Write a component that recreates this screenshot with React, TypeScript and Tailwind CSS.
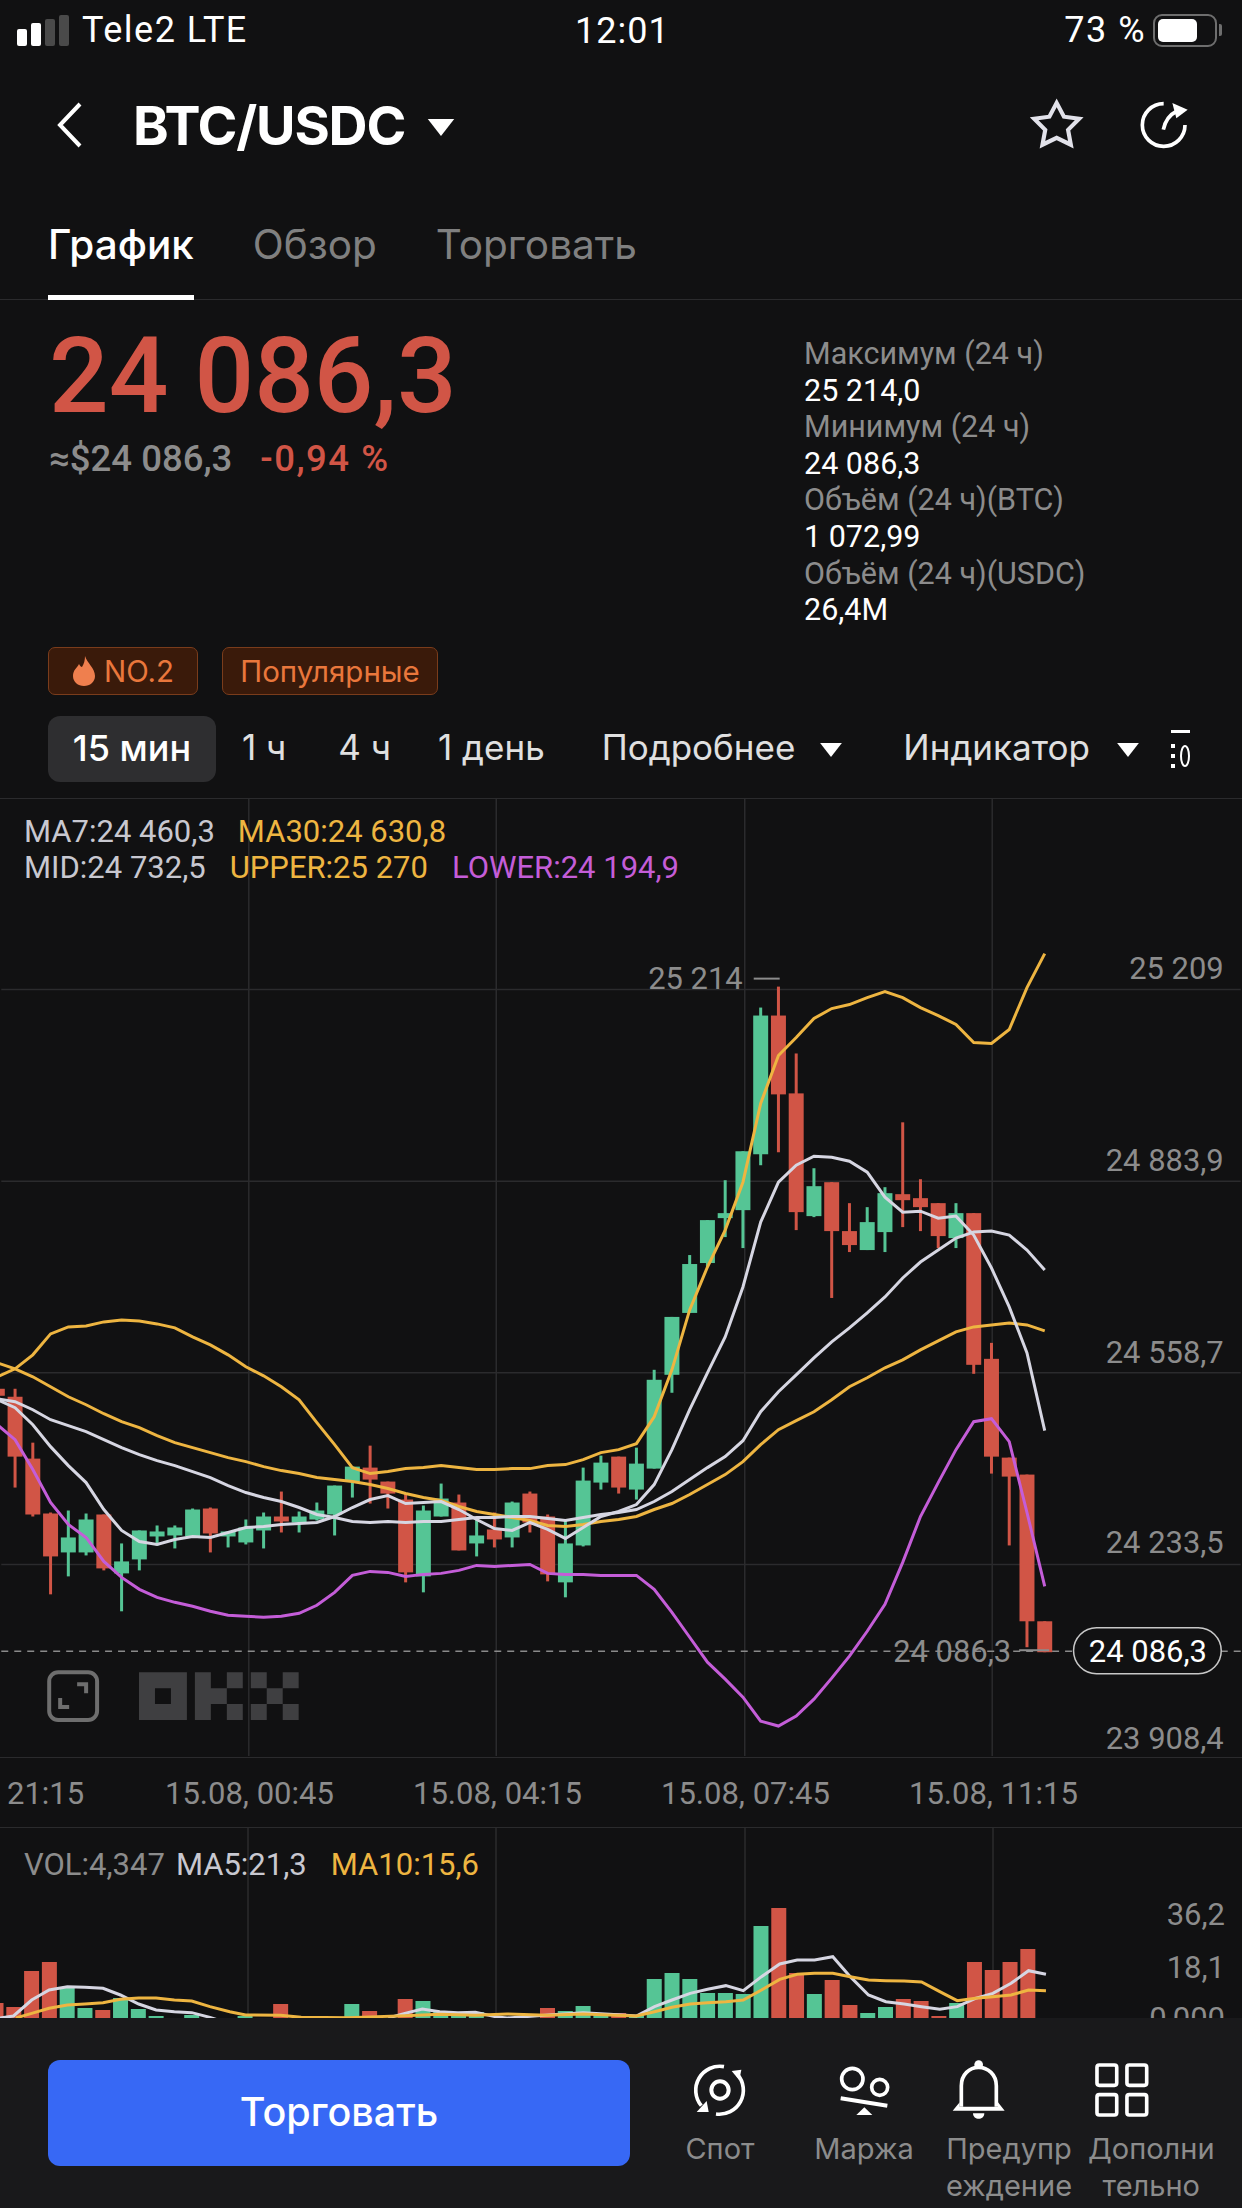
const GREEN = "#55c595";
const RED = "#d15546";
const GRID = "#2b2b2d";

const cx = (i: number) => 13.8 + 17.79 * i;

// i, wick top, wick bottom, body top, body bottom, up
type Candle = [number, number, number, number, number, boolean];
const candles: Candle[] = [
  [-1, 1389, 1400, 1389, 1396, false],
  [0, 1389, 1488, 1397, 1457, false],
  [1, 1443, 1517, 1459, 1515, false],
  [2, 1513, 1595, 1514, 1557, false],
  [3, 1511, 1577, 1538, 1553, true],
  [4, 1514, 1556, 1520, 1553, true],
  [5, 1515, 1571, 1515, 1569, false],
  [6, 1544, 1612, 1562, 1574, true],
  [7, 1531, 1571, 1531, 1560, true],
  [8, 1526, 1546, 1532, 1537, true],
  [9, 1526, 1549, 1528, 1536, true],
  [10, 1509, 1537, 1510, 1537, true],
  [11, 1508, 1553, 1509, 1534, false],
  [12, 1532, 1548, 1532, 1537, true],
  [13, 1520, 1545, 1528, 1543, true],
  [14, 1513, 1549, 1517, 1531, true],
  [15, 1492, 1533, 1517, 1522, false],
  [16, 1512, 1533, 1517, 1523, true],
  [17, 1503, 1521, 1511, 1520, true],
  [18, 1486, 1536, 1486, 1515, true],
  [19, 1467, 1498, 1467, 1482, true],
  [20, 1446, 1504, 1468, 1480, false],
  [21, 1482, 1509, 1482, 1494, false],
  [22, 1494, 1583, 1500, 1573, false],
  [23, 1506, 1593, 1511, 1577, true],
  [24, 1484, 1517, 1499, 1517, true],
  [25, 1495, 1551, 1503, 1551, false],
  [26, 1520, 1557, 1536, 1544, true],
  [27, 1513, 1548, 1530, 1540, false],
  [28, 1502, 1548, 1503, 1538, true],
  [29, 1492, 1533, 1494, 1523, false],
  [30, 1515, 1582, 1517, 1575, false],
  [31, 1520, 1598, 1544, 1583, true],
  [32, 1468, 1547, 1481, 1546, true],
  [33, 1456, 1490, 1463, 1483, true],
  [34, 1457, 1494, 1457, 1488, false],
  [35, 1448, 1500, 1464, 1490, true],
  [36, 1370, 1469, 1380, 1469, true],
  [37, 1317, 1393, 1317, 1375, true],
  [38, 1255, 1313, 1264, 1313, true],
  [39, 1220, 1267, 1220, 1263, true],
  [40, 1180, 1237, 1213, 1218, true],
  [41, 1151, 1248, 1151, 1210, true],
  [42, 1007, 1165, 1015, 1154, true],
  [43, 986, 1152, 1015, 1094, false],
  [44, 1053, 1230, 1093, 1212, false],
  [45, 1168, 1217, 1186, 1216, true],
  [46, 1182, 1298, 1182, 1231, false],
  [47, 1203, 1252, 1231, 1245, false],
  [48, 1207, 1250, 1222, 1250, true],
  [49, 1187, 1252, 1193, 1232, true],
  [50, 1122, 1227, 1194, 1200, false],
  [51, 1179, 1231, 1198, 1207, false],
  [52, 1203, 1248, 1203, 1236, false],
  [53, 1203, 1248, 1213, 1238, true],
  [54, 1213, 1374, 1213, 1365, false],
  [55, 1343, 1474, 1359, 1457, false],
  [56, 1458, 1546, 1458, 1477, false],
  [57, 1475, 1648, 1475, 1622, false],
  [58, 1622, 1653, 1622, 1653, false],
];

// line values per candle, starting at candle -1
const upper = [1377, 1369, 1355, 1334, 1327, 1326, 1322, 1320, 1321, 1324, 1328, 1337, 1345, 1355, 1367, 1376, 1387, 1400, 1423, 1445, 1468, 1474, 1472, 1469, 1468, 1466, 1468, 1470, 1470, 1469, 1469, 1466, 1465, 1460, 1453, 1450, 1444, 1417, 1370, 1310, 1267, 1230, 1182, 1103, 1055, 1037, 1018, 1008, 1004, 997, 991, 997, 1007, 1015, 1024, 1042, 1043, 1029, 987, 953];
const ma30 = [1363, 1369, 1377, 1387, 1397, 1405, 1414, 1422, 1428, 1436, 1443, 1448, 1453, 1458, 1462, 1467, 1471, 1474, 1478, 1480, 1482, 1485, 1489, 1494, 1498, 1501, 1507, 1512, 1515, 1518, 1521, 1526, 1527, 1525, 1522, 1520, 1517, 1510, 1504, 1495, 1485, 1475, 1462, 1445, 1430, 1421, 1412, 1400, 1387, 1378, 1368, 1360, 1350, 1341, 1332, 1327, 1325, 1323, 1325, 1331];
const ma7 = [1400, 1408, 1425, 1447, 1466, 1483, 1510, 1531, 1542, 1545, 1540, 1537, 1538, 1533, 1528, 1527, 1525, 1524, 1523, 1517, 1508, 1500, 1496, 1504, 1503, 1502, 1510, 1520, 1529, 1531, 1523, 1530, 1539, 1528, 1517, 1512, 1505, 1485, 1450, 1410, 1373, 1337, 1287, 1222, 1182, 1165, 1156, 1157, 1161, 1172, 1197, 1212, 1211, 1218, 1216, 1235, 1268, 1307, 1353, 1431];
const mid = [1399, 1402, 1410, 1420, 1426, 1432, 1440, 1448, 1455, 1461, 1466, 1472, 1478, 1486, 1493, 1498, 1502, 1508, 1515, 1518, 1522, 1523, 1522, 1523, 1522, 1522, 1520, 1518, 1518, 1517, 1517, 1519, 1521, 1518, 1515, 1513, 1510, 1502, 1492, 1480, 1468, 1457, 1441, 1412, 1392, 1375, 1358, 1342, 1328, 1313, 1297, 1278, 1262, 1250, 1238, 1232, 1231, 1235, 1250, 1270];
const lower = [1425, 1440, 1470, 1503, 1525, 1538, 1562, 1578, 1590, 1598, 1603, 1607, 1612, 1616, 1617, 1618, 1617, 1614, 1606, 1593, 1576, 1572, 1573, 1577, 1575, 1574, 1571, 1566, 1567, 1566, 1565, 1574, 1575, 1575, 1576, 1576, 1576, 1590, 1613, 1638, 1663, 1680, 1698, 1722, 1727, 1717, 1700, 1679, 1657, 1632, 1605, 1563, 1517, 1483, 1450, 1422, 1419, 1442, 1513, 1587];

const toPoints = (ys: number[]) => ys.map((y, k) => `${cx(k - 1)},${y}`).join(" ");

// candle index, height, up
const volumes: [number, number, boolean][] = [
  [-1, 15, false], [0, 11, false], [1, 47, false], [2, 56, false], [3, 30, true], [4, 10, true], [5, 8, false], [6, 20, true], [7, 9, true], [8, 2, true], [10, 3, true],
  [13, 2, true], [15, 14, false], [19, 14, true], [20, 7, false], [22, 19, false], [23, 17, true], [24, 6, true], [25, 2, true], [26, 6, true],
  [30, 10, false], [31, 7, true], [32, 12, true], [33, 5, true], [34, 5, false], [35, 3, true],
  [36, 39, true], [37, 45, true], [38, 39, true], [39, 25, true], [40, 25, true], [41, 24, true], [42, 92, true], [43, 110, false], [44, 45, false], [45, 24, true], [46, 38, false], [47, 13, false], [48, 5, true], [49, 11, true], [50, 19, false], [51, 17, false], [52, 2, false], [53, 15, true], [54, 56, false], [55, 48, false], [56, 56, false], [57, 69, false],
];

const volMa5: [number, number][] = [[0, 714], [17, 708], [40, 660], [62, 630], [85, 620], [107, 622], [130, 625], [152, 645], [175, 672], [197, 690], [220, 695], [242, 698], [265, 712], [275, 720]];
const volMa5b: [number, number][] = [[490, 714], [511, 700], [533, 687], [555, 695], [578, 698], [600, 697], [625, 710], [640, 714], [692, 705], [736, 698], [780, 704], [803, 708], [826, 680], [848, 660], [871, 640], [893, 628], [916, 617], [938, 632], [961, 590], [984, 552], [1006, 540], [1028, 540], [1051, 530], [1073, 590], [1096, 645], [1118, 665], [1141, 672], [1163, 680], [1186, 688], [1208, 680], [1231, 655], [1253, 640], [1276, 610], [1298, 572], [1320, 583]];
const volMa10: [number, number][] = [[20, 714], [40, 700], [62, 685], [85, 675], [107, 672], [130, 668], [152, 658], [175, 654], [197, 654], [220, 660], [242, 663], [265, 680], [290, 695], [310, 705], [354, 706], [380, 712], [440, 713], [511, 707], [555, 703], [600, 706], [640, 702], [690, 706], [736, 702], [803, 708], [826, 695], [848, 682], [871, 672], [893, 668], [916, 665], [938, 660], [961, 630], [984, 598], [1006, 583], [1028, 580], [1051, 580], [1073, 590], [1096, 600], [1118, 602], [1141, 603], [1163, 606], [1186, 635], [1208, 662], [1231, 655], [1253, 650], [1276, 645], [1298, 630], [1320, 632]];

const volPoints = (pts: [number, number][]) =>
  pts.map(([x, y]) => `${x / 1.262},${1780 + y / 3}`).join(" ");

const gridX = [248, 496, 745, 993];

function Triangle({ className }: { className: string }) {
  return (
    <svg className={className} viewBox="0 0 28 18">
      <polygon points="0,0 28,0 14,18" fill="#fff" />
    </svg>
  );
}

function StatusBar() {
  return (
    <div className="relative flex h-[60px] items-center justify-between pl-[17px] pr-[20px] font-['Roboto',sans-serif] text-[36px] tracking-[1.5px] text-white">
      <div className="flex items-center gap-[13px]">
        <div className="flex h-[31px] items-end gap-[4px]">
          <div className="h-[17px] w-[10px] rounded-[2px] bg-white" />
          <div className="h-[23px] w-[10px] rounded-[2px] bg-white" />
          <div className="h-[27px] w-[10px] rounded-[2px] bg-[#4a4a4a]" />
          <div className="h-[31px] w-[10px] rounded-[2px] bg-[#4a4a4a]" />
        </div>
        <span>Tele2 LTE</span>
      </div>
      <span className="absolute left-[575px] top-[4px] tracking-[1px]">12:01</span>
      <div className="flex items-center gap-[7px]">
        <span>73 %</span>
        <div className="flex items-center gap-[2px]">
          <div className="flex h-[33px] w-[64px] items-center rounded-[9px] border-[2px] border-[#6e6e6e] p-[3px]">
            <div className="h-[23px] w-[39px] rounded-[5px] bg-white" />
          </div>
          <div className="h-[12px] w-[3px] rounded-r-[2px] bg-[#6e6e6e]" />
        </div>
      </div>
    </div>
  );
}

function NavBar() {
  return (
    <div className="flex h-[130px] items-center justify-between pl-[57px] pr-[52px] font-['Inter',sans-serif]">
      <div className="flex items-center">
        <svg className="h-[46px] w-[26px]" viewBox="0 0 26 46">
          <polyline points="23,2 3,23 23,44" fill="none" stroke="#fff" strokeWidth="4" />
        </svg>
        <span className="ml-[50px] text-[54px] font-bold tracking-[-1.2px] text-white">BTC/USDC</span>
        <Triangle className="ml-[22px] mt-[4px] h-[17px] w-[28px]" />
      </div>
      <div className="flex items-center gap-[54px]">
        <svg className="h-[54px] w-[54px]" viewBox="30 30 156 156">
          <polygon
            points="107,44 128,84 172,90 140,122 148,165 107,145 66,165 74,122 42,90 86,84"
            fill="none"
            stroke="#e2e2ea"
            strokeWidth="12"
          />
        </svg>
        <svg className="h-[52px] w-[52px]" viewBox="355 30 156 156">
          <path
            d="M432 44 A64 64 0 1 0 496 108"
            fill="none"
            stroke="#fff"
            strokeWidth="11"
          />
          <path d="M431 122 C436 96 448 78 472 66" fill="none" stroke="#fff" strokeWidth="11" />
          <polygon points="458,42 504,62 470,88" fill="#fff" />
        </svg>
      </div>
    </div>
  );
}

function Tabs() {
  return (
    <div className="flex h-[110px] items-start gap-[59px] border-b border-[#2b2b2d] pl-[48px] font-['Inter',sans-serif] text-[40.5px]">
      <div className="flex h-[110px] flex-col justify-between">
        <span className="mt-[31px] font-medium leading-[48px] text-white">График</span>
        <div className="h-[5px] w-full bg-white" />
      </div>
      <span className="mt-[31px] leading-[48px] text-[#808080]">Обзор</span>
      <span className="mt-[31px] leading-[48px] text-[#808080]">Торговать</span>
    </div>
  );
}

function StatLine({ label, value }: { label: string; value: string }) {
  return (
    <>
      <div className="h-[36.6px] leading-[36.6px] text-[#8c8c8c]">{label}</div>
      <div className="h-[36.6px] leading-[36.6px] text-white">{value}</div>
    </>
  );
}

function PriceBlock() {
  return (
    <div className="flex h-[347px] justify-between pl-[49px] pr-[70px] font-['Roboto',sans-serif]">
      <div>
        <div className="mt-[17px] text-[105px] font-medium leading-[120px] text-[#d15546]">24 086,3</div>
        <div className="flex gap-[28px] text-[36.5px] font-medium leading-[44px]">
          <span className="text-[#8c8c8c]">≈$24 086,3</span>
          <span className="tracking-[1.5px] text-[#d15546]">-0,94 %</span>
        </div>
      </div>
      <div className="mt-[36px] w-[368px] text-[30.5px]">
        <StatLine label="Максимум (24 ч)" value="25 214,0" />
        <StatLine label="Минимум (24 ч)" value="24 086,3" />
        <StatLine label="Объём (24 ч)(BTC)" value="1 072,99" />
        <StatLine label="Объём (24 ч)(USDC)" value="26,4M" />
      </div>
    </div>
  );
}

function Badges() {
  return (
    <div className="flex h-[48px] gap-[24px] pl-[48px] font-['Inter',sans-serif] text-[29.5px] text-[#e9773c]">
      <div className="flex w-[150px] items-center gap-[8px] rounded-[7px] border border-[#7a3c1b] bg-[#3a1a0a] pl-[23px]">
        <svg className="h-[30px] w-[24px]" viewBox="0 0 24 30">
          <path d="M13 0 C15 7 23 12 23 20 C23 26 18 30 12 30 C6 30 1 26 1 20 C1 14 5 12 7 8 C8 10 9 11 10 11 C12 8 13 4 13 0 Z" fill="#ef7f4e" />
        </svg>
        <span>NO.2</span>
      </div>
      <div className="flex w-[216px] items-center justify-center rounded-[7px] border border-[#7a3c1b] bg-[#3a1a0a]">
        Популярные
      </div>
    </div>
  );
}

function PeriodRow() {
  return (
    <div className="mt-[21px] flex h-[66px] items-center pl-[48px] font-['Inter',sans-serif] text-[35px] text-[#e0e0e0]">
      <div className="flex h-[66px] w-[168px] items-center justify-center rounded-[12px] bg-[#2e2e30] text-[36px] font-medium text-white">
        <span className="-mt-[3px]">15 мин</span>
      </div>
      <div className="-mt-[3px] flex items-center">
        <span className="ml-[26px]">1 ч</span>
        <span className="ml-[52px]">4 ч</span>
        <span className="ml-[47px]">1 день</span>
        <span className="ml-[57px]">Подробнее</span>
        <Triangle className="ml-[25px] mt-[5px] h-[14px] w-[22px]" />
        <span className="ml-[61px]">Индикатор</span>
        <Triangle className="ml-[27px] mt-[5px] h-[14px] w-[22px]" />
      </div>
      <svg className="ml-[30px] h-[38px] w-[22px]" viewBox="0 0 22 38">
        <rect x="2" y="0" width="19" height="3" fill="#fff" />
        <rect x="2" y="14" width="4" height="4" fill="#fff" />
        <rect x="2" y="24" width="4" height="4" fill="#fff" />
        <rect x="2" y="34" width="4" height="4" fill="#fff" />
        <ellipse cx="16" cy="26" rx="4" ry="10" fill="none" stroke="#fff" strokeWidth="2" />
      </svg>
    </div>
  );
}

function PriceChart() {
  return (
    <div className="relative h-[960px] border-y border-[#2b2b2d] font-['Roboto',sans-serif]">
      <svg className="absolute inset-0 h-full w-full" viewBox="0 798 1242 960">
        {[989, 1181, 1373, 1565].map((y) => (
          <line key={y} x1="0" x2="1242" y1={y} y2={y} stroke={GRID} strokeWidth="1.5" />
        ))}
        {gridX.map((x) => (
          <line key={x} x1={x} x2={x} y1="798" y2="1757" stroke={GRID} strokeWidth="1.5" />
        ))}
        <line x1="0" x2="1242" y1="1652" y2="1652" stroke="#8a8a8a" strokeWidth="1.5" strokeDasharray="7 6" />
        {candles.map(([i, wt, wb, bt, bb, up]) => (
          <g key={i} fill={up ? GREEN : RED}>
            <rect x={cx(i) - 1.5} y={wt} width="3" height={wb - wt} />
            <rect x={cx(i) - 7.5} y={bt} width="15" height={bb - bt} />
          </g>
        ))}
        <polyline points={toPoints(upper)} fill="none" stroke="#eeb541" strokeWidth="3" />
        <polyline points={toPoints(ma30)} fill="none" stroke="#eeb541" strokeWidth="3" />
        <polyline points={toPoints(mid)} fill="none" stroke="#d6d6e2" strokeWidth="3" />
        <polyline points={toPoints(ma7)} fill="none" stroke="#d6d6e2" strokeWidth="3" />
        <polyline points={toPoints(lower)} fill="none" stroke="#c45dd8" strokeWidth="3" />

        <g fill="#8c8c8c" fontSize="31" textAnchor="end">
          <text x="1225" y="978">25 209</text>
          <text x="1225" y="1171">24 883,9</text>
          <text x="1225" y="1363">24 558,7</text>
          <text x="1225" y="1554">24 233,5</text>
          <text x="1225" y="1750">23 908,4</text>
          <text x="743" y="988">25 214</text>
          <text x="1012" y="1663">24 086,3</text>
        </g>
        <line x1="754" x2="780" y1="978" y2="978" stroke="#8c8c8c" strokeWidth="2" />
        <line x1="1020" x2="1050" y1="1651" y2="1651" stroke="#8c8c8c" strokeWidth="2" />

        <rect x="1074.5" y="1628.5" width="148" height="46" rx="23" fill="#111112" stroke="#c8c8c8" strokeWidth="1.5" />
        <text x="1149" y="1663" fontSize="31" fill="#fff" textAnchor="middle">24 086,3</text>

        {/* fullscreen button */}
        <rect x="48" y="1673" width="48" height="48" rx="9" fill="none" stroke="#6e6e6e" strokeWidth="4" />
        <path d="M76 1685 H85 V1694 M59 1699 V1708 H68" fill="none" stroke="#6e6e6e" strokeWidth="4" />

        {/* OKX logo */}
        <g fill="#3f3f41">
          <path fillRule="evenodd" d="M138 1673 H186 V1721 H138 Z M154 1689 V1705 H170 V1689 Z" />
          <path d="M194 1673 H210 V1689 H226 V1673 H242 V1689 H226 V1705 H242 V1721 H226 V1705 H210 V1721 H194 Z" />
          <path d="M250 1673 H266 V1689 H282 V1673 H298 V1689 H282 V1705 H298 V1721 H282 V1705 H266 V1721 H250 V1705 H266 V1689 H250 Z" />
        </g>
      </svg>
      <div className="relative pl-[24px] pt-[15px] text-[31px] leading-[36px]">
        <div className="flex gap-[23px]">
          <span className="text-[#c8c8d0]">MA7:24 460,3</span>
          <span className="text-[#eeb541]">MA30:24 630,8</span>
        </div>
        <div className="flex gap-[24px]">
          <span className="text-[#c8c8d0]">MID:24 732,5</span>
          <span className="text-[#eeb541]">UPPER:25 270</span>
          <span className="text-[#c45dd8]">LOWER:24 194,9</span>
        </div>
      </div>
    </div>
  );
}

function TimeAxis() {
  return (
    <div className="h-[70px] border-b border-[#2b2b2d] font-['Roboto',sans-serif] text-[31px] leading-[36px] text-[#8c8c8c]">
      <div className="flex h-full items-start pt-[18px]">
        <span className="ml-[7px] w-[76px]">21:15</span>
        <span className="ml-[82px] w-[248px]">15.08, 00:45</span>
        <span className="w-[248px]">15.08, 04:15</span>
        <span className="w-[248px]">15.08, 07:45</span>
        <span>15.08, 11:15</span>
      </div>
    </div>
  );
}

function VolumeChart() {
  return (
    <div className="relative h-[190px] overflow-hidden font-['Roboto',sans-serif]">
      <svg className="absolute inset-0 h-full w-full" viewBox="0 1828 1242 190">
        {gridX.map((x) => (
          <line key={x} x1={x} x2={x} y1="1828" y2="2018" stroke={GRID} strokeWidth="1.5" />
        ))}
        {volumes.map(([i, h, up]) => (
          <rect key={i} x={cx(i) - 7.5} y={2018 - h} width="15" height={h} fill={up ? GREEN : RED} />
        ))}
        <polyline points={volPoints(volMa5)} fill="none" stroke="#d6d6e2" strokeWidth="3" />
        <polyline points={volPoints(volMa5b)} fill="none" stroke="#d6d6e2" strokeWidth="3" />
        <polyline points={volPoints(volMa10)} fill="none" stroke="#eeb541" strokeWidth="3" />
        <g fill="#8c8c8c" fontSize="31" textAnchor="end">
          <text x="1225" y="1925">36,2</text>
          <text x="1225" y="1978">18,1</text>
          <text x="1225" y="2029">0,000</text>
        </g>
      </svg>
      <div className="relative flex pl-[24px] pt-[19px] text-[31px] leading-[36px]">
        <span className="text-[#8c8c8c]">VOL:4,347</span>
        <span className="ml-[11px] text-[#c8c8d0]">MA5:21,3</span>
        <span className="ml-[24px] text-[#eeb541]">MA10:15,6</span>
      </div>
    </div>
  );
}

function BarItem({ label, icon, className }: { label: string; icon: React.ReactNode; className: string }) {
  return (
    <div className={`flex flex-col ${className}`}>
      <div className="flex h-[60px] items-center justify-center">{icon}</div>
      <div className="mt-[10px] whitespace-pre-line text-center text-[29px] leading-[37px] text-[#8c8c8c]">{label}</div>
    </div>
  );
}

function BottomBar() {
  return (
    <div className="flex h-[190px] items-start bg-[#19191b] pl-[48px] pt-[42px] font-['Inter',sans-serif]">
      <div className="flex h-[106px] w-[582px] items-center justify-center rounded-[12px] bg-[#3768f5] text-[39.5px] font-medium text-white">
        Торговать
      </div>
      <BarItem
        className="ml-[52px] w-[76px] items-center"
        label="Спот"
        icon={
          <svg className="h-[60px] w-[60px]" viewBox="30 25 180 180" fill="none" stroke="#fff">
            <circle cx="120" cy="115" r="26" strokeWidth="12" />
            <path d="M132 45 A72 72 0 0 0 64 162" strokeWidth="11" />
            <polygon points="50,181 86,181 80,148" fill="#fff" stroke="none" />
            <path d="M108 187 A72 72 0 0 0 172 68" strokeWidth="11" />
            <polygon points="155,58 184,54 178,86" fill="#fff" stroke="none" />
          </svg>
        }
      />
      <BarItem
        className="ml-[56px] w-[100px] items-center"
        label="Маржа"
        icon={
          <svg className="h-[60px] w-[60px]" viewBox="460 25 180 180" fill="none" stroke="#fff">
            <circle cx="515" cy="82" r="32" strokeWidth="11" />
            <circle cx="597" cy="107" r="24" strokeWidth="11" />
            <line x1="480" y1="140" x2="620" y2="162" strokeWidth="12" />
            <polygon points="527,190 575,190 551,167" fill="#fff" stroke="none" />
          </svg>
        }
      />
      <BarItem
        className="ml-[32px] w-[126px] items-start"
        label={"Предупр\nеждение"}
        icon={
          <svg className="ml-[3px] h-[60px] w-[60px]" viewBox="25 28 180 180" fill="none" stroke="#fff">
            <circle cx="114" cy="42" r="13" fill="#fff" stroke="none" />
            <path d="M62 168 V105 C62 72 86 50 114 50 C142 50 167 72 167 105 V168" strokeWidth="11" />
            <polygon points="36,180 192,180 172,155 172,168 57,168 57,155" fill="#fff" stroke="none" />
            <path d="M97 188 H131 C131 210 97 210 97 188 Z" fill="#fff" stroke="none" />
          </svg>
        }
      />
      <BarItem
        className="ml-[16px] w-[128px] items-start"
        label={"Дополни\nтельно"}
        icon={
          <svg className="ml-[7px] h-[54px] w-[54px]" viewBox="464 34 164 164" fill="none" stroke="#fff" strokeWidth="11">
            <rect x="470" y="40" width="60" height="62" rx="7" />
            <rect x="561" y="40" width="60" height="62" rx="7" />
            <rect x="470" y="130" width="60" height="62" rx="7" />
            <rect x="561" y="130" width="60" height="62" rx="7" />
          </svg>
        }
      />
    </div>
  );
}

export default function App() {
  return (
    <div className="flex h-[2208px] w-[1242px] flex-col overflow-hidden bg-[#111112]">
      <StatusBar />
      <NavBar />
      <Tabs />
      <PriceBlock />
      <Badges />
      <PeriodRow />
      <div className="h-[16px]" />
      <PriceChart />
      <TimeAxis />
      <VolumeChart />
      <BottomBar />
    </div>
  );
}
